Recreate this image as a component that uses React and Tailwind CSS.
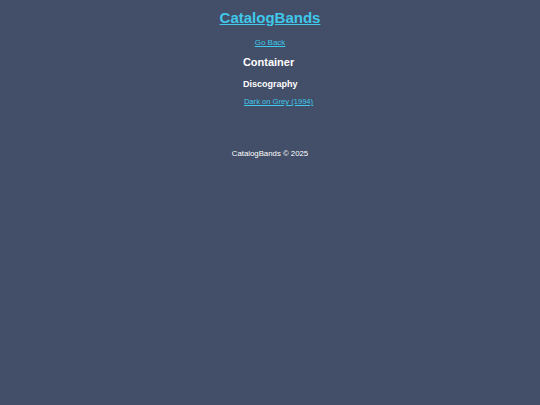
export default function App() {
  return (
    <div className="min-h-screen bg-[#434e68] leading-none text-white" style={{ fontFamily: '"Liberation Sans", Arial, sans-serif' }}>
      {/* Header */}
      <header className="flex flex-col items-center pt-[9px]">
        <a href="#" className="block text-[15px] font-bold leading-[18px] text-[#3fc8ea] underline">
          CatalogBands
        </a>
        <a href="#" className="mt-[11px] block text-[8px] leading-[10px] text-[#3fc8ea] underline">
          Go Back
        </a>
      </header>

      {/* Band */}
      <main className="flex justify-center">
        <div className="ml-[16px] text-left">
          <h2 className="mt-[7px] text-[11px] font-bold leading-[14px]">Container</h2>
          <h3 className="mt-[10px] text-[9px] font-bold leading-[11px]">Discography</h3>
          <ul className="mt-[7px] pl-[1px]">
            <li className="leading-[10px]">
              <a href="#" className="block text-[7.6px] leading-[10px] text-[#3fc8ea] underline">
                Dark on Grey (1994)
              </a>
            </li>
          </ul>
        </div>
      </main>

      {/* Footer */}
      <footer className="mt-[42px] text-center text-[7.8px] leading-[10px] text-white">
        CatalogBands © 2025
      </footer>
    </div>
  );
}
